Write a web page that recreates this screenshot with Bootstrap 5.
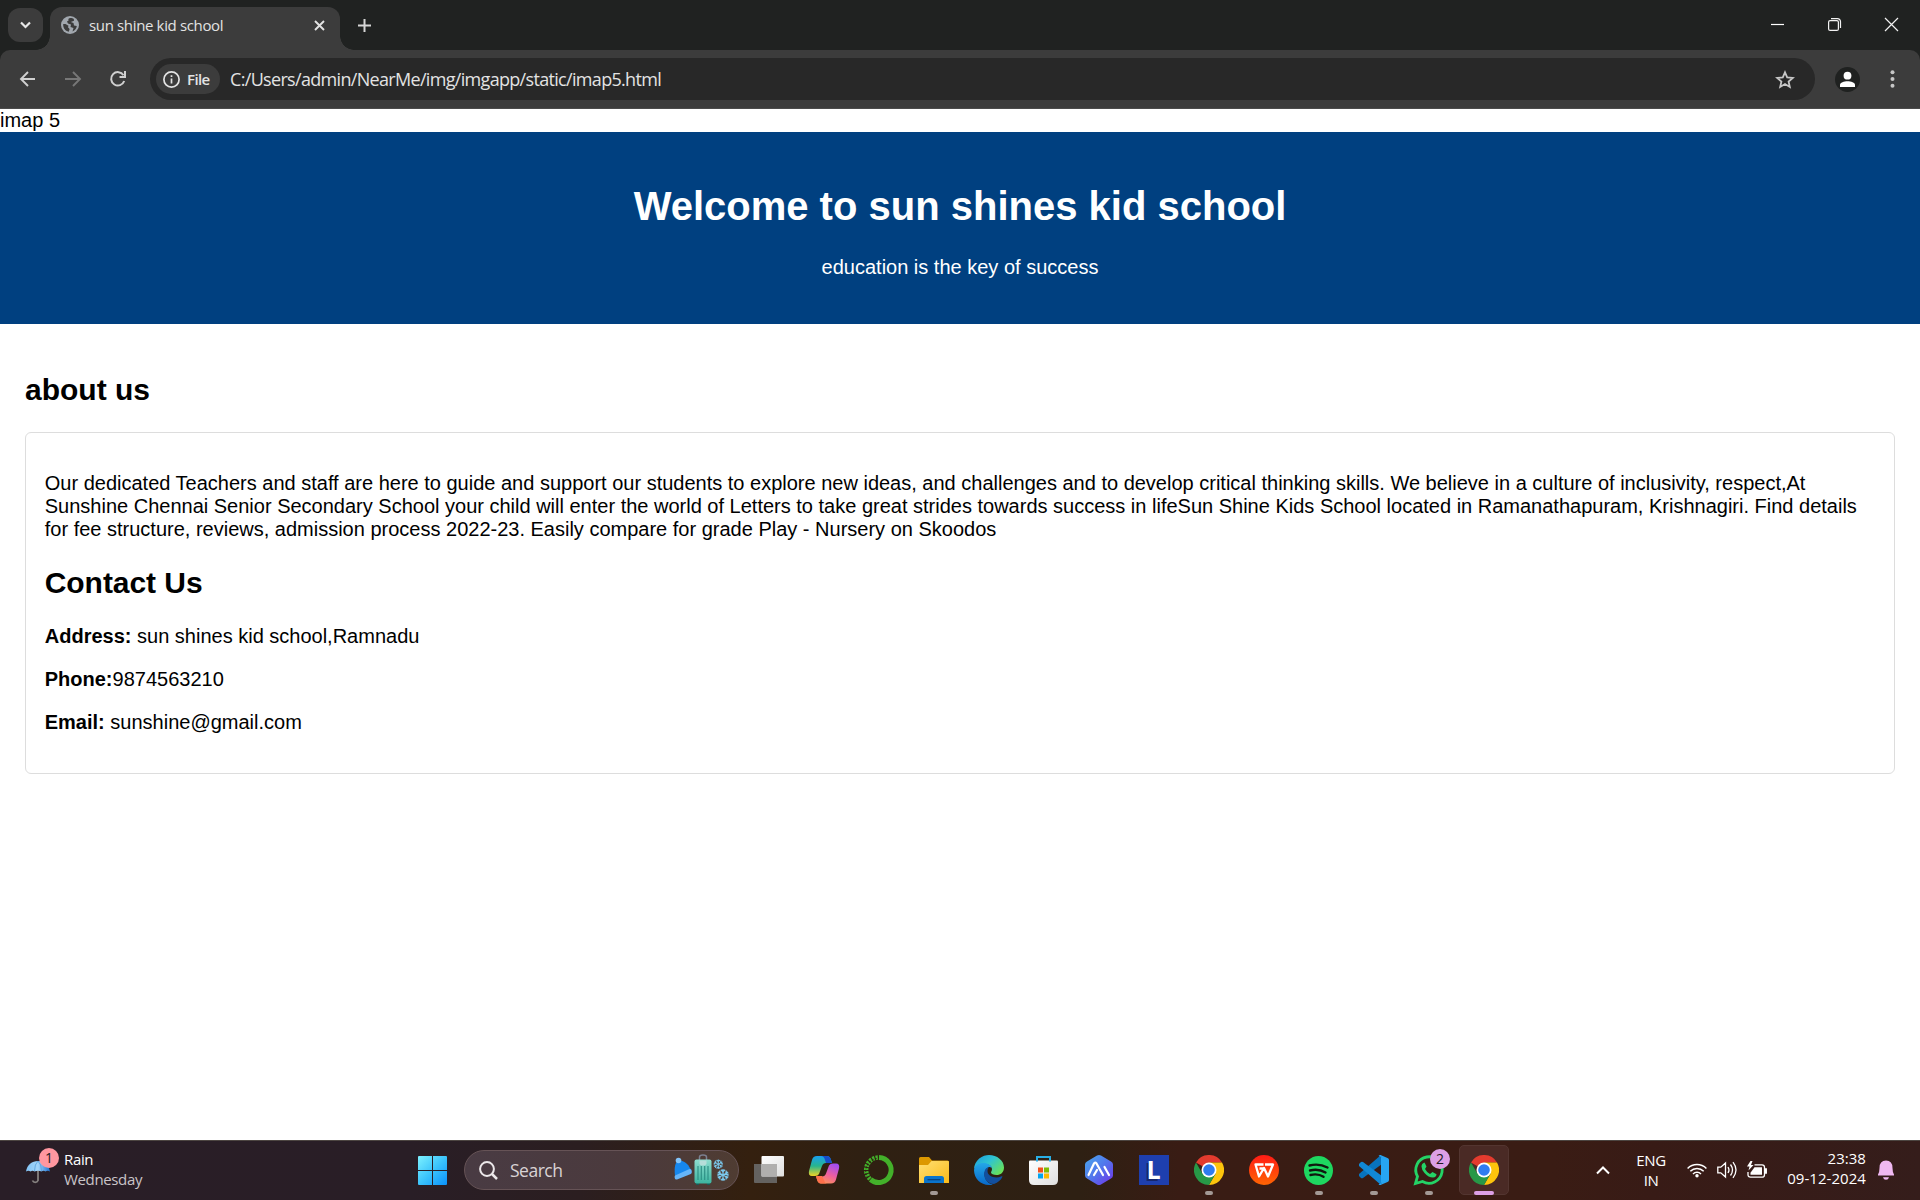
<!DOCTYPE html>
<html lang="en">
<head>
<meta charset="utf-8">
<meta name="viewport" content="width=device-width, initial-scale=1">
<title>sun shine kid school</title>
<link href="https://cdn.jsdelivr.net/npm/bootstrap@5.3.0/dist/css/bootstrap.min.css" rel="stylesheet">
<style>
body{font-family:"Liberation Sans",Arial,sans-serif;font-size:20px;line-height:23px;color:#000;background:#fff}
.ui{font-family:"Open Sans","Noto Sans",sans-serif}
svg{display:block;flex:none;overflow:visible}
/* window frame */
.titlebar{height:50px;background:#202221;color:#e3e3e3}
.tab-list-btn{width:35px;height:34px;margin:8px 7px 0 8px;border-radius:12px;background:#3c3c3c}
.page-tab{width:290px;height:43px;margin-top:7px;padding:0 15px 7px 11px;border-radius:12px 12px 0 0;background:#3c3c3c;position:relative}
.page-tab::before,.page-tab::after{content:"";position:absolute;bottom:0;width:14px;height:14px}
.page-tab::before{left:-14px;background:radial-gradient(circle at 0 0,transparent 13.5px,#3c3c3c 14px)}
.page-tab::after{right:-14px;background:radial-gradient(circle at 100% 0,transparent 13.5px,#3c3c3c 14px)}
.tab-title{font-size:15px;letter-spacing:-.35px;line-height:20px;margin-left:10px}
.new-tab{margin:19px 0 0 16px}
.win-controls{height:48px;width:149px;padding-right:22px}
.toolbar-wrap{background:#202221}
.toolbar{height:59px;background:#3c3c3c;border-bottom:1px solid #4b4b4b;border-radius:10px 10px 0 0;color:#c7c7c7}
.nav-icons{width:150px;padding-left:19px;gap:26px}
.omnibox{height:42px;width:1665px;border-radius:21px;background:#282828;padding:0 20px 0 6px;color:#e3e3e3}
.file-chip{width:64px;height:30px;border-radius:15px;background:#3c3c3c;padding-left:7px;gap:7px}
.file-chip span{font-size:15px;font-weight:600;letter-spacing:-.6px;line-height:20px;margin-top:-1px}
.url{font-size:18px;letter-spacing:-.68px;margin-left:10px;line-height:24px}
.avatar{margin-left:20px}
.menu-dots{margin-left:30px}
/* school page */
.viewport-area{height:1031px}
.hero{height:192px;background:#004080;color:#fff;padding:25px}
.hero h1{font-size:40px;line-height:46px;font-weight:700;margin:26.4px 0 26.4px}
.hero p,.details p{margin:20px 0}
.about{padding:25px}
.about h2{font-size:30px;line-height:34px;font-weight:700;margin:24.4px 0}
.about .details h2{margin:25.4px 0 24.6px;letter-spacing:-.06px}
.details{border:1px solid #ddd;border-radius:6px;padding:19px 18.75px;height:342px}
/* taskbar */
.taskbar{height:60px;border-top:1px solid #4c4541;padding-bottom:1px;color:#fff;background:linear-gradient(90deg,#291e27 0,#291e26 410px,#2b1e20 580px,#34200f 750px,#2f2012 860px,#2e2013 1080px,#391c14 1180px,#3a1c14 1550px,#381b16 1650px,#351d1b 1920px)}
.weather{width:405px;padding-left:25px;font-size:15px;line-height:20px;letter-spacing:-.35px}
.weather .icon-box{width:39px}
.weather .forecast{margin-top:-3px}
.weather .day{color:#c9c4c8}
.count-badge{position:absolute;width:20px;height:20px;border-radius:50%;font-size:14px;line-height:20px;text-align:center;color:#221a20;letter-spacing:0}
.badge-news{left:14px;top:-9px;background:#ff97a0}
.badge-chat{left:29px;top:8px;background:#dda0e6}
.cell{width:55px;height:59px;position:relative;flex:none}
.run::after{content:"";position:absolute;left:24px;top:50px;width:8px;height:4px;border-radius:2px;background:#a39995}
.current::before{content:"";position:absolute;left:3px;top:4px;width:50px;height:50px;border-radius:5px;background:#4a2a25;border:1px solid #533530}
.current::after{left:18px;width:20px;background:#dda0e6}
.current svg{position:relative}
.searchbox{width:275px;height:40px;margin:0 2px 0 4px;border-radius:20px;border:1px solid #665356;background:linear-gradient(90deg,#493b43,#4b3a3d 60%,#4f3c32);padding:0 8px 0 14px}
.searchbox span{font-size:17.5px;letter-spacing:-.5px;color:#d9d3d5;margin-left:12px}
.l-tile{width:30px;height:30px;background:#1e3fae;font:bold 25px/29px "Open Sans",sans-serif;text-align:center;text-shadow:-2px 2px 0 #16266d}
.tray{font-size:15px;line-height:20px;letter-spacing:-.4px;padding-right:25px}
.tray .lang{width:44px;margin:-1px 14px 0 19px}
.tray .clock{width:84px;margin:-4px 11px 0 14px;letter-spacing:.05px}
.tray .vol,.tray .batt{margin-left:10px}
</style>
</head>
<body class="vh-100 overflow-hidden">
<svg width="0" height="0" class="position-absolute" aria-hidden="true">
<defs>
<linearGradient id="winG" x1="0" y1="0" x2="1" y2="1"><stop stop-color="#7df1ff"/><stop offset=".5" stop-color="#3cc4fb"/><stop offset="1" stop-color="#0a91fb"/></linearGradient>
<linearGradient id="copA" x1="0" y1="0" x2="0" y2="1"><stop stop-color="#199ff0"/><stop offset=".5" stop-color="#27b58e"/><stop offset="1" stop-color="#f0d425"/></linearGradient>
<linearGradient id="copB" x1=".7" y1="0" x2=".2" y2="1"><stop stop-color="#a34df0"/><stop offset=".5" stop-color="#ee5f9e"/><stop offset="1" stop-color="#ff9b4d"/></linearGradient>
<linearGradient id="foldG" x1="0" y1="0" x2="1" y2="1"><stop stop-color="#ffdf74"/><stop offset="1" stop-color="#fbbb19"/></linearGradient>
<linearGradient id="edgeG" x1="0" y1="0" x2="1" y2=".7"><stop stop-color="#1a9be0"/><stop offset=".5" stop-color="#2fc4d2"/><stop offset="1" stop-color="#68e15a"/></linearGradient>
<linearGradient id="edgeB" x1="0" y1="0" x2="0" y2="1"><stop stop-color="#24a7e8"/><stop offset="1" stop-color="#0868c9"/></linearGradient>
<linearGradient id="hexG" x1="0" y1="0" x2="1" y2="1"><stop stop-color="#49a9ec"/><stop offset=".5" stop-color="#5276ec"/><stop offset="1" stop-color="#7130e8"/></linearGradient>
<linearGradient id="wpsG" x1="0" y1="0" x2="0" y2="1"><stop stop-color="#ff1b16"/><stop offset="1" stop-color="#ff6503"/></linearGradient>
<linearGradient id="umbG" x1="0" y1="0" x2="1" y2="0"><stop stop-color="#81c3f5"/><stop offset=".5" stop-color="#a4d5fa"/><stop offset="1" stop-color="#1b72d3"/></linearGradient>
<linearGradient id="whiteG" x1="0" y1="0" x2="1" y2="1"><stop stop-color="#fff"/><stop offset="1" stop-color="#dedede"/></linearGradient>
<linearGradient id="caseG" x1="0" y1="0" x2="0" y2="1"><stop stop-color="#8fdccf"/><stop offset="1" stop-color="#3cb5a0"/></linearGradient>
<symbol id="chrome" viewBox="0 0 30 30">
<path d="M15 15 2 7.500A15 15 0 0 1 28 7.500H15Z" fill="#e33b2e"/>
<path d="M15 7.500h13A15 15 0 0 1 15 30l6.500-11.200Z" fill="#fdc40c"/>
<path d="M2 7.500A15 15 0 0 0 15 30l6.500-11.200H8.500Z" fill="#279847"/>
<circle cx="15" cy="15" r="7.500" fill="#fff"/><circle cx="15" cy="15" r="5.800" fill="#2f7cf0"/>
</symbol>
<symbol id="flake" viewBox="-6 -6 12 12" overflow="visible">
<path id="arm" d="M0-5.500v11M-2-4.800 0-3l2-1.800M-2 4.800 0 3l2 1.800" fill="none" stroke="#7bc9ee" stroke-width="1.200"/>
<use href="#arm" transform="rotate(60)"/><use href="#arm" transform="rotate(120)"/>
</symbol>
</defs>
</svg>

<header class="ui">
  <div class="titlebar d-flex align-items-start">
    <div class="tab-list-btn d-flex align-items-center justify-content-center"><svg width="11" height="8" fill="none" stroke="#e8e8e8" stroke-width="2.200"><path d="m1 1.500 4.500 4.500L10 1.500"/></svg></div>
    <div class="page-tab d-flex align-items-center">
      <svg width="18" height="18" viewBox="0 0 18 18"><circle cx="9" cy="9" r="9" fill="#a1a7ae"/><path d="M9.500 2C7.500 2 7 3 7.600 4.500L6 5.500 7 7.500 10 8.500 9.500 11 12.500 12 11.500 15.500C14 14.500 15.500 12.500 15.800 10L13 9.500 12.500 7 9.800 6 13 4.800 12.800 3C12 2.300 10.800 2 9.500 2ZM2.200 8C2 12 4 14.800 7.800 15.800L8.600 13 7 11.200 7.500 9.800 4.500 8Z" fill="#3c3c3c"/></svg>
      <span class="tab-title me-auto">sun shine kid school</span>
      <svg width="11" height="11" stroke="#e3e3e3" stroke-width="1.900"><path d="m1 1 9 9m0-9-9 9"/></svg>
    </div>
    <svg width="13" height="13" class="new-tab" stroke="#d6d6d6" stroke-width="2"><path d="M2 6.500h13M8.500 0v13"/></svg>
    <div class="win-controls ms-auto d-flex align-items-center justify-content-between">
      <svg width="13" height="13" stroke="#fff" stroke-width="1.200"><path d="M0 6.500h13"/></svg>
      <svg width="13" height="13" fill="none" stroke="#f2f2f2" stroke-width="1.200"><rect x=".6" y="2.600" width="9.800" height="9.800" rx="1.500"/><path d="M3 .6h6.500a3 3 0 0 1 3 3V10"/></svg>
      <svg width="13" height="13" stroke="#f2f2f2" stroke-width="1.200"><path d="m0 0 13 13m0-13L0 13"/></svg>
    </div>
  </div>
  <div class="toolbar-wrap">
  <div class="toolbar d-flex align-items-center">
    <div class="nav-icons d-flex align-items-center">
      <svg width="18" height="16" fill="none" stroke="#d0d0d0" stroke-width="1.900"><path d="M16 8H2.500M9 1 2 8l7 7"/></svg>
      <svg width="18" height="16" class="ms-1" fill="none" stroke="#777" stroke-width="1.900"><path d="M-2 8h14.500M6 1l7 7-7 7"/></svg>
      <svg width="16" height="16" viewBox="1 0 16 16" fill="none" stroke="#d0d0d0" stroke-width="2"><path d="M14.200 10A6.700 6.700 0 1 1 13.500 4.200"/><path d="M15 0v6H9.500"/></svg>
    </div>
    <div class="omnibox d-flex align-items-center">
      <div class="file-chip d-flex align-items-center">
        <svg width="17" height="17" fill="none" stroke="#e3e3e3" stroke-width="1.700"><circle cx="8.500" cy="8.500" r="7.600"/><path d="M8.500 7.500v5M8.500 4.300v1.800"/></svg><span>File</span>
      </div>
      <span class="url me-auto">C:/Users/admin/NearMe/img/imgapp/static/imap5.html</span>
      <svg width="20" height="19" viewBox="0 0 20 19" fill="none" stroke="#c7c7c7" stroke-width="1.800"><path d="m10 2.300 2.200 5.100 5.600.500-4.200 3.700 1.200 5.400L10 14.100l-4.800 2.900 1.200-5.400L2.200 7.900l5.600-.5Z"/></svg>
    </div>
    <svg width="25" height="25" class="avatar"><circle cx="12.500" cy="12.500" r="12.500" fill="#1f2120"/><circle cx="12.500" cy="8.700" r="3.900" fill="#fff"/><path d="M5 20v-2.200C5 15.500 9 14.200 12.500 14.200s7.500 1.300 7.500 3.600V20Z" fill="#fff"/></svg>
    <svg width="5" height="18" class="menu-dots" fill="#c7c7c7"><circle cx="2.500" cy="2.200" r="2"/><circle cx="2.500" cy="9" r="2"/><circle cx="2.500" cy="15.800" r="2"/></svg>
  </div>
  </div>
</header>

<main class="viewport-area">
  <div>imap 5</div>
  <section class="hero text-center overflow-hidden">
    <h1>Welcome to sun shines kid school</h1>
    <p>education is the key of success</p>
  </section>
  <section class="about">
    <h2>about us</h2>
    <div class="details">
      <p>Our dedicated Teachers and staff are here to guide and support our students to explore new ideas, and challenges and to develop critical thinking skills. We believe in a culture of inclusivity, respect,At Sunshine Chennai Senior Secondary School your child will enter the world of Letters to take great strides towards success in lifeSun Shine Kids School located in Ramanathapuram, Krishnagiri. Find details for fee structure, reviews, admission process 2022-23. Easily compare for grade Play - Nursery on Skoodos</p>
      <h2>Contact Us</h2>
      <p><strong>Address:</strong> sun shines kid school,Ramnadu</p>
      <p><strong>Phone:</strong>9874563210</p>
      <p><strong>Email:</strong> sunshine@gmail.com</p>
    </div>
  </section>
</main>

<footer class="taskbar ui d-flex align-items-center">
  <div class="weather d-flex align-items-center">
    <div class="icon-box position-relative">
      <svg width="26" height="26" viewBox="0 0 26 26"><path d="M13 9v13.500a3 3 0 0 1-5.500 0" fill="none" stroke="#85817f" stroke-width="1.800" transform="translate(0 1)"/><path d="M1 14.500C2 8 7 4 13 4s11 4 12 10.500q-2.500-1.500-4.500 0-2-1.500-4 0-3.500-1.500-7 0-2-1.500-4 0-2-1.500-4.500 0Z" fill="url(#umbG)"/><path d="M9.500 14Q9.500 7 13 4q3.500 3 3.500 10" fill="none" stroke="#589fdc" stroke-width=".8"/></svg>
      <span class="count-badge badge-news">1</span>
    </div>
    <div class="forecast"><div>Rain</div><div class="day">Wednesday</div></div>
  </div>
  <div class="cell d-flex align-items-center justify-content-center"><svg width="29" height="29"><path d="M0 1a1 1 0 0 1 1-1h13v14H0ZM15 0h13a1 1 0 0 1 1 1v13H15ZM0 15h14v14H1a1 1 0 0 1-1-1ZM15 15h14v13a1 1 0 0 1-1 1H15Z" fill="url(#winG)"/></svg></div>
  <div class="searchbox d-flex align-items-center">
    <svg width="19" height="19" fill="none" stroke="#ece8ea" stroke-width="2"><circle cx="8" cy="8" r="6.900"/><path d="m13 13 5 5" stroke-width="2.500"/></svg>
    <span class="me-auto">Search</span>
    <svg width="56" height="30" viewBox="0 0 56 30">
      <path d="M1 21C0 12 1 5.500 6 5.500 12 6 15 11 17 15Z" fill="#1687ee"/><path d="m1 20.500 14.500-6.500q2-.3 2.300 2t-1 3L3 24.500q-2 .3-2.300-1.500t.3-2.500Z" fill="#65b5fa"/><circle cx="4.500" cy="5.500" r="2.800" fill="#83c4fa"/>
      <path d="M25.500 7V2q0-2 3.500-2t3.500 2v5" fill="none" stroke="#7c8192" stroke-width="1.500"/><path d="M22 27.500h3v2.500h-3Zm11 0h3v2.500h-3Z" fill="#1b5a55"/><rect x="20.500" y="4.500" width="17" height="24" rx="2" fill="url(#caseG)"/><path d="M24 11v14M27.300 11v14M30.700 11v14M34 11v14" stroke="#2f9186" stroke-width="1.200"/><path d="M25.500 5.500h7V9l-1.500 1.500h-4L25.500 9Z" fill="#b6ddd9"/>
      <use href="#flake" x="39" y="4" width="10.500" height="10.500"/><use href="#flake" x="42.500" y="13.500" width="13" height="13"/>
    </svg>
  </div>
  <div class="cell d-flex align-items-center justify-content-center"><svg width="30" height="28"><path d="M0 8h23v19H1a1 1 0 0 1-1-1Z" fill="#646260"/><rect x="7.500" width="22.500" height="20.500" rx="1" fill="url(#whiteG)"/><path d="M7.500 8H23v12.500H7.500Z" fill="#b0afae"/></svg></div>
  <div class="cell d-flex align-items-center justify-content-center"><svg width="30" height="28" viewBox="0 0 30 28"><path d="M8 0h10q3 0 4 4l1 3h-6q-3 0-4 3l-3 8q-1 2-4 2H3q-4 0-3-5L3 4Q4 0 8 0Z" fill="url(#copA)"/><path d="M12 0h6q3 0 4 4l1 3h-6l-1-3q-1-4-4-4Z" fill="#164dc9"/><path d="M22 27.500H12q-3 0-4-4l-1-3h6q3 0 4-3l3-8q1-2 4-2h3q4 0 3 5l-3 11q-1 4-5 4Z" fill="url(#copB)"/><path d="M7 20h6l2 4q1 3.500 3 3.500h-6q-3 0-4-4Z" fill="#ff704c"/></svg></div>
  <div class="cell d-flex align-items-center justify-content-center"><svg width="30" height="30" fill="none" stroke="#43b02a"><path d="M15 2.500a12.500 12.500 0 1 1-8.500 22" stroke-width="5"/><path d="M6 24A12.500 12.500 0 0 1 14 2.500" stroke-width="4.500" stroke-dasharray="2.200 1.100"/><path d="M3.500 23A13 13 0 0 1 13 3.500" stroke="#2f2013" stroke-width="1.100" stroke-dasharray="1.800 1.500"/></svg></div>
  <div class="cell run d-flex align-items-center justify-content-center"><svg width="30" height="26"><path d="M0 1.500Q0 0 1.500 0H10l3 3.500h15.500q1.500 0 1.500 1.500v5H0Z" fill="#dc9800"/><path d="M0 8h9l3.500-4H29a1 1 0 0 1 1 1v21H0Z" fill="url(#foldG)"/><path d="M5 26v-4.500q0-2.500 2.500-2.500h15q2.500 0 2.500 2.500V26Z" fill="#0a74cc"/><path d="M8.500 22.700h13" stroke="#073f7a" stroke-width="1.200"/></svg></div>
  <div class="cell d-flex align-items-center justify-content-center"><svg width="30" height="30" viewBox="0 0 30 30"><path d="M0 15C0 4.500 9 0 15 0c8 0 15 5.500 15 12.500 0 5-3.500 7.500-7.500 7.500-3 0-5.500-1-5.500-2.500 0-1 1-1.500 1-3.500 0-3-3.500-5-8-5C5 9 1 11 0 15Z" fill="url(#edgeG)"/><path d="M0 15C1 10 5 8 9.500 8 14 8 18 10.500 18 14c0-1.500-2.500-2.500-4-1.500C8 16 10 28 19 29.500 9 32 0 25 0 15Z" fill="url(#edgeB)"/><path d="M11 15c-3 7 2 14 9 14 4-1.500 7-4 8.300-7 .3-.8-.3-1-.8-.7-6 3-14 0-14-5.300 0-2 .8-3 1.500-3.800-1.500 0-3 .8-4 2.800Z" fill="#124f9e"/></svg></div>
  <div class="cell d-flex align-items-center justify-content-center"><svg width="29" height="29"><path d="M8 7V1h13v6" fill="none" stroke="#29afe5" stroke-width="2"/><path d="M1 4.500h27q1 0 1 1V24q0 5-5 5H5q-5 0-5-5V5.500q0-1 1-1Z" fill="url(#whiteG)"/><path d="M8 5.500V4M21 5.500V4" stroke="#29afe5" stroke-width="2"/><path d="M9 11.500h5v5H9Z" fill="#f1511b"/><path d="M15 11.500h5v5h-5Z" fill="#80bb03"/><path d="M9 17.500h5v5H9Z" fill="#02a4ef"/><path d="M15 17.500h5v5h-5Z" fill="#fbb902"/></svg></div>
  <div class="cell d-flex align-items-center justify-content-center"><svg width="28" height="30"><path d="M12 .5q2-1 4 0l10 6q2 1 2 3v11q0 2-2 3l-10 6q-2 1-4 0l-10-6q-2-1-2-3v-11q0-2 2-3Z" fill="url(#hexG)"/><path d="M3.500 20 9 8.500q1-2 2.500 0L18 20M9 20l3-5M19.500 12l4.500 8" fill="none" stroke="#fff" stroke-width="2.200" stroke-linecap="round" stroke-linejoin="round"/></svg></div>
  <div class="cell d-flex align-items-center justify-content-center"><div class="l-tile">L</div></div>
  <div class="cell run d-flex align-items-center justify-content-center"><svg width="30" height="30"><use href="#chrome"/></svg></div>
  <div class="cell d-flex align-items-center justify-content-center"><svg width="30" height="30"><circle cx="15" cy="15" r="15" fill="url(#wpsG)"/><path d="M14.500 9.500H6.500L10 21.500 15 13l4 8.500 5-12h-8M10.500 13.500h4" fill="none" stroke="#fff" stroke-width="2.300" stroke-linejoin="round"/></svg></div>
  <div class="cell run d-flex align-items-center justify-content-center"><svg width="29" height="29"><circle cx="14.500" cy="14.500" r="14.500" fill="#1ed760"/><path d="M5.500 9.500q9.500-2.500 18 2M6 14.500q8.500-2.200 15.500 2M6.500 19q7.500-1.800 13 1.800" fill="none" stroke="#10180f" stroke-width="2.400" stroke-linecap="round"/></svg></div>
  <div class="cell run d-flex align-items-center justify-content-center"><svg width="30" height="30"><path d="m22 0-22 19v2l2 2q1 .5 2 0L23 9Z" fill="#0873bd"/><path d="M22 30 0 11V9l2-2q1-.5 2 0l19 14Z" fill="#1188d5"/><path d="m21.500 0 7 3q1.500.7 1.500 2v20q0 1.300-1.500 2l-7 3q-1 .3-2-.8l3-1V2l-3-1q1-1.200 2-1Z" fill="#27a5f2"/><path d="M22 2v26l7-2V4Z" fill="#27a5f2"/></svg></div>
  <div class="cell run d-flex align-items-center justify-content-center"><svg width="30" height="30"><path d="M1.500 28.500 3.500 21.500a13.200 13.200 0 1 1 5 5Z" fill="none" stroke="#24d366" stroke-width="2.800"/><path d="M10.500 7.500 12.500 11.500 11 14q1.500 3 5 5l2.500-2 4 2.200q0 3-3.500 3.300-4.500 0-8.500-4.500-3-3.500-3-6.500 0-3 3-4Z" fill="#24d366"/></svg><span class="count-badge badge-chat">2</span></div>
  <div class="cell run current d-flex align-items-center justify-content-center"><svg width="30" height="30"><use href="#chrome"/></svg></div>
  <div class="tray ms-auto d-flex align-items-center">
    <svg width="14" height="9" fill="none" stroke="#fff" stroke-width="2"><path d="m1 7.500 6-6 6 6"/></svg>
    <div class="lang text-center">ENG<br>IN</div>
    <svg width="20" height="16" fill="none" stroke="#fff" stroke-width="1.500"><path d="M.6 6.500a13.300 13.300 0 0 1 18.800 0M3.300 9.200a9.500 9.500 0 0 1 13.400 0M6 12a5.700 5.700 0 0 1 8 0"/><circle cx="10" cy="13.800" r="1.700" fill="#fff" stroke="none"/></svg>
    <svg width="20" height="18" class="vol" fill="none" stroke="#fff" stroke-width="1.300"><path d="M.8 6.200h3L8.500 2v14l-4.700-4.200h-3ZM11 6q2 3 0 6M13.500 3.500q4 5.500 0 11M16 1.200q6 7.800 0 15.600"/></svg>
    <svg width="21" height="18" class="batt" fill="none" stroke="#fff" stroke-width="1.300"><path d="M7.500 3.800h7.500q2.500 0 2.500 2.500v7.400q0 2.500-2.500 2.500H3.500Q1 16.200 1 13.700V11"/><path d="M7.500 6.200H15v7.500H3.500v-2Z" fill="#fff" stroke="none"/><path d="M17.500 8h1.800v4h-1.800" fill="#fff"/><path d="M3.500 0 0 5.500h2.500L1.500 9.500 6.500 4H4l1.500-4Z" fill="#fff" stroke="none"/></svg>
    <div class="clock text-end text-nowrap">23:38<br>09-12-2024</div>
    <svg width="18" height="20" fill="#efb8f1"><path d="M1 14.500Q2.500 12 2.500 8q0-7.500 6.500-7.500T15.500 8q0 4 1.500 6.500v1H1ZM6 17.200h6q-.6 2.500-3 2.500t-3-2.500Z"/></svg>
  </div>
</footer>
<script src="https://cdn.jsdelivr.net/npm/bootstrap@5.3.0/dist/js/bootstrap.bundle.min.js"></script>
</body>
</html>
